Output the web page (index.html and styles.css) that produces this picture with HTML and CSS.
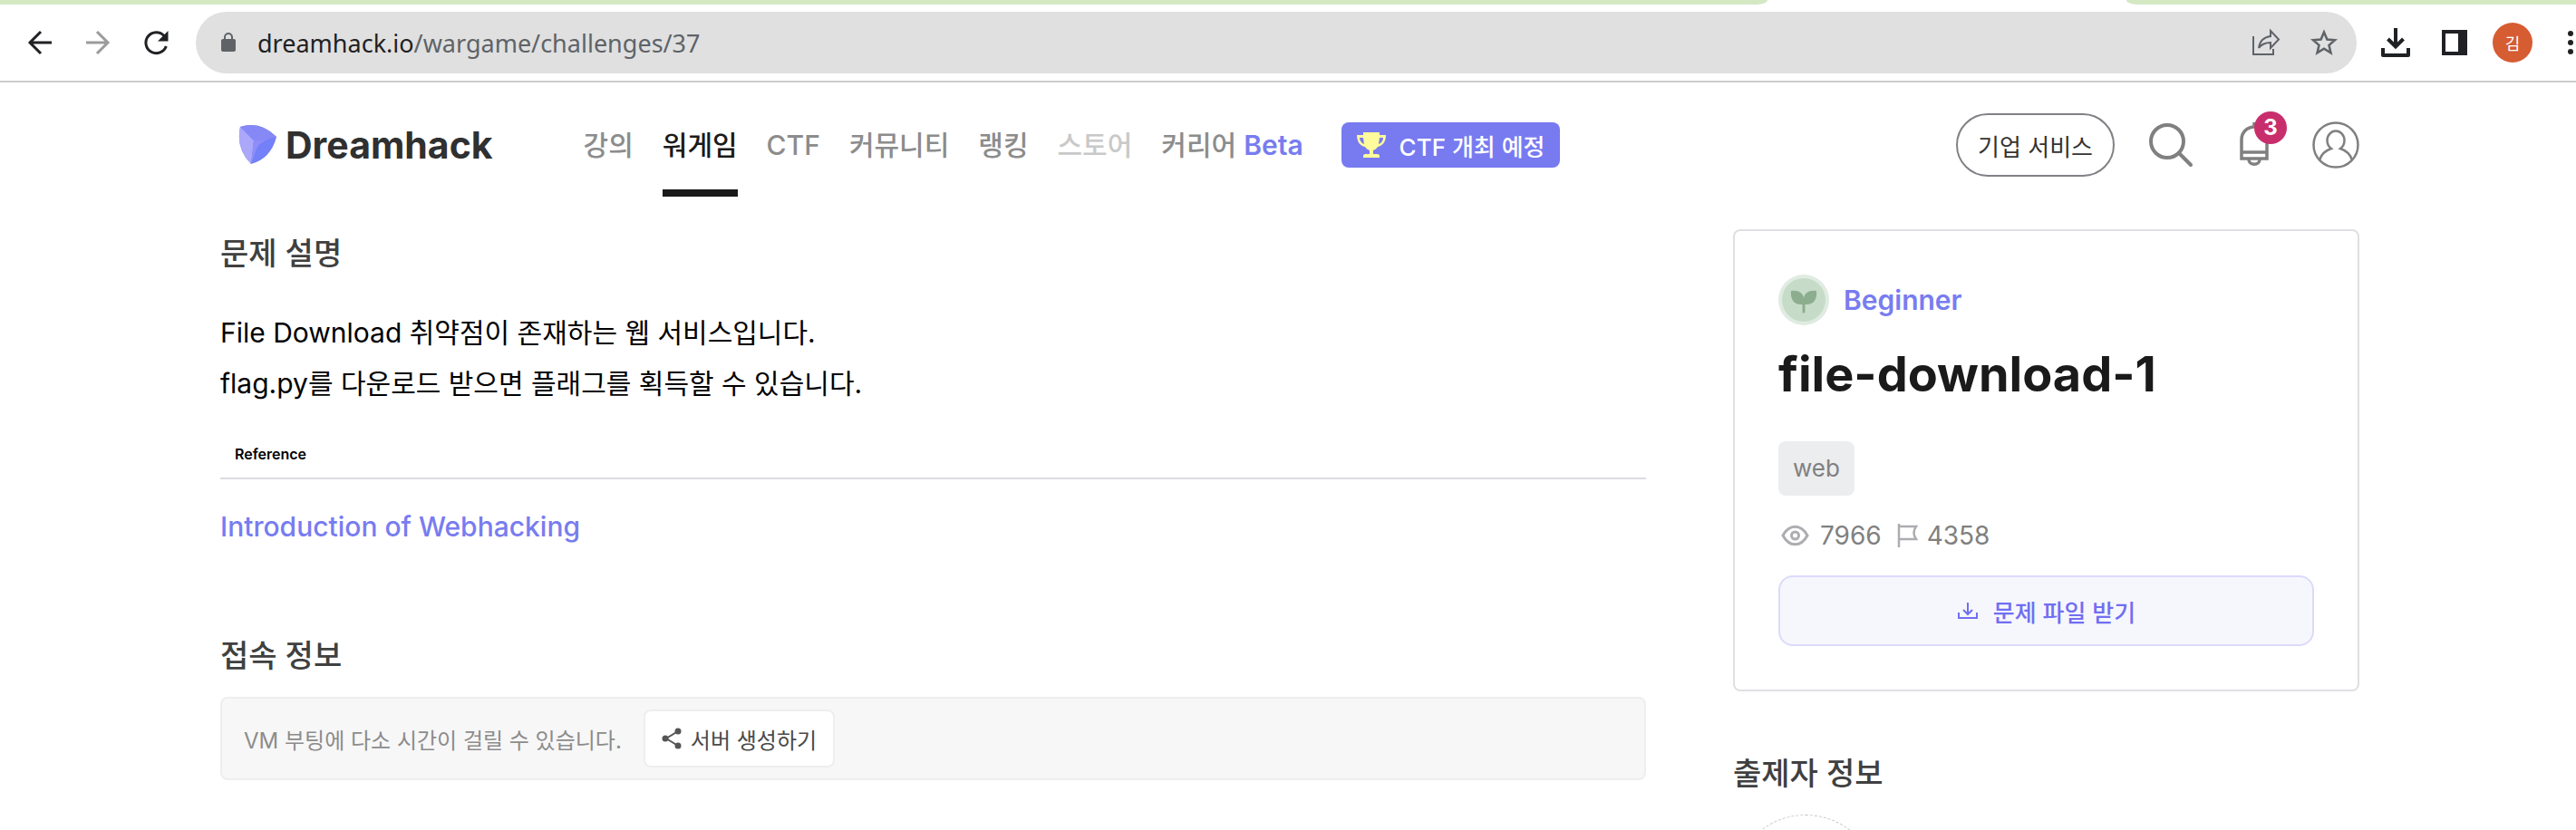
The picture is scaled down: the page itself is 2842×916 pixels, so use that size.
FILE: index.html
```html
<!DOCTYPE html>
<html lang="ko">
<head>
  <meta charset="UTF-8">
  <meta name="viewport" content="width=device-width, initial-scale=1.0">
  <title>file-download-1 | Dreamhack</title>
  <link rel="stylesheet" href="styles.css">
</head>
<body>
  <!-- browser bar -->
  <div class="tab-strip">
    <div class="tabs-left"></div>
    <div class="tabs-right"></div>
  </div>
  <div class="toolbar">
    <button class="tool-btn" aria-label="뒤로">
      <svg width="32" height="32" viewBox="0 0 32 32" fill="none" stroke="#202124" stroke-width="3"><path d="M29 16H5M17 4L5 16l12 12"/></svg>
    </button>
    <button class="tool-btn" aria-label="앞으로">
      <svg width="32" height="32" viewBox="0 0 32 32" fill="none" stroke="#9b9b9b" stroke-width="3"><path d="M3 16h24M15 4l12 12-12 12"/></svg>
    </button>
    <button class="tool-btn" aria-label="새로고침">
      <svg width="32" height="32" viewBox="0 0 32 32"><path d="M25 8.500A11.500 11.500 0 1 0 27.300 20" fill="none" stroke="#202124" stroke-width="3"/><path d="M29.500 3v11.500H18z" fill="#202124"/></svg>
    </button>
    <div class="omnibox">
      <svg class="lock" width="16" height="22" viewBox="0 0 16 22"><rect y="7" width="16" height="14" rx="2" fill="#5f6368"/><path d="M4 8V5a4 4 0 0 1 8 0v3" fill="none" stroke="#5f6368" stroke-width="2"/></svg>
      <span class="url"><span class="url-host">dreamhack.io</span>/wargame/challenges/37</span>
      <button class="tool-btn" aria-label="공유">
        <svg width="32" height="32" viewBox="0 0 32 32" fill="none" stroke="#5f6368" stroke-width="2"><path d="M2 9v20h22v-6"/><path d="M21 3l9 9.500L21 22v-6c-6 0-10 2-13 6 1-7 5-12 13-13z"/></svg>
      </button>
      <button class="tool-btn" aria-label="북마크">
        <svg width="32" height="32" viewBox="0 0 32 32" fill="none" stroke="#5f6368" stroke-width="2.500"><path d="M16 4.500l3.400 8 8.600.7-6.500 5.700 2 8.500-7.500-4.600-7.500 4.600 2-8.500L4 13.200l8.600-.7z"/></svg>
      </button>
    </div>
    <button class="tool-btn" aria-label="다운로드">
      <svg width="34" height="34" viewBox="0 0 34 34" fill="none" stroke="#202124" stroke-width="4"><path d="M17 1v20M8.500 13l8.500 8.500 8.500-8.500"/><path d="M3 23v8h28v-8" stroke-linejoin="round"/></svg>
    </button>
    <button class="tool-btn" aria-label="사이드 패널">
      <svg width="32" height="32" viewBox="0 0 32 32"><path d="M2 2h28v28H2zM6 6v20h14V6z" fill="#202124" fill-rule="evenodd"/></svg>
    </button>
    <button class="profile">김</button>
    <button class="tool-btn menu-btn" aria-label="메뉴">
      <svg width="8" height="28" viewBox="0 0 8 28" fill="#202124"><circle cx="4" cy="4" r="3"/><circle cx="4" cy="14" r="3"/><circle cx="4" cy="24" r="3"/></svg>
    </button>
  </div>

  <header class="header">
    <a class="logo" href="#">
      <svg width="44" height="44" viewBox="0 0 44 44"><path d="M2 2Q24-5 42 13Q36 37 14 43Q-3 26 2 2z" fill="#7380f7"/><path d="M2 2Q-3 26 14 43L17 17z" fill="#aba8fa"/><path d="M2 2Q24-5 42 13L26 17.500L17 17z" fill="#8688f6"/><path d="M17 17Q29 18 42 13Q24 18 21 24L14 43z" fill="#8f8df7"/></svg>
      <span>Dreamhack</span>
    </a>
    <nav class="nav">
      <a href="#">강의</a>
      <a class="active" href="#">워게임</a>
      <a href="#">CTF</a>
      <a href="#">커뮤니티</a>
      <a href="#">랭킹</a>
      <a class="disabled" href="#">스토어</a>
      <a href="#">커리어 <span class="beta">Beta</span></a>
    </nav>
    <a class="ctf-banner" href="#">
      <svg width="34" height="30" viewBox="0 0 34 30"><path d="M8 1h18v3h7c0 8-4 12-9 13-1 2-3 3-5 4v4h5c1 0 2 1 2 2v2H8v-2c0-1 1-2 2-2h5v-4c-2-1-4-2-5-4C5 16 1 12 1 4h7zM4 7c0 3 2 6 5 7L8 7zM30 7h-4l-1 7c3-1 5-4 5-7z" fill="#fdfb9b" fill-rule="evenodd"/></svg>
      <span>CTF 개최 예정</span>
    </a>
    <div class="header-right">
      <button class="biz-btn">기업 서비스</button>
      <button class="icon-btn" aria-label="검색">
        <svg width="52" height="52" viewBox="0 0 52 52" fill="none" stroke="#808080" stroke-width="4"><circle cx="20" cy="22" r="18"/><path d="M33 35l13 13" stroke-linecap="round"/></svg>
      </button>
      <button class="icon-btn bell" aria-label="알림">
        <svg width="52" height="52" viewBox="0 0 52 52" fill="none" stroke="#808080" stroke-width="3.500"><path d="M12 41V20a14 14 0 0 1 28 0v21zM12 34h28M20 42c0 7 12 7 12 0M26 6V1"/></svg>
        <span class="badge">3</span>
      </button>
      <button class="icon-btn" aria-label="내 정보">
        <svg width="52" height="52" viewBox="0 0 52 52" fill="none" stroke="#808080" stroke-width="2.500"><circle cx="26" cy="26" r="24.500"/><path d="M8 43C10 35 15 32 21 30C17 27 16.500 24 16.500 21a9.500 10.500 0 0 1 19 0C35.500 24 35 27 31 30C37 32 42 35 44 43"/></svg>
      </button>
    </div>
  </header>

  <div class="content">
    <main class="main">
      <h2>문제 설명</h2>
      <p class="desc">File Download 취약점이 존재하는 웹 서비스입니다.<br>flag.py를 다운로드 받으면 플래그를 획득할 수 있습니다.</p>
      <h3 class="ref-title">Reference</h3>
      <a class="ref-link" href="#">Introduction of Webhacking</a>
      <h2>접속 정보</h2>
      <div class="vm-box">
        <span>VM 부팅에 다소 시간이 걸릴 수 있습니다.</span>
        <button class="vm-btn">
          <svg width="22" height="24" viewBox="0 0 22 24" fill="#555"><path d="M18 4L5 12l13 8" fill="none" stroke="#555" stroke-width="2"/><circle cx="18" cy="4" r="3.500"/><circle cx="4" cy="12" r="3.500"/><circle cx="18" cy="20" r="3.500"/></svg>
          서버 생성하기
        </button>
      </div>
    </main>

    <aside class="side">
      <section class="card">
        <div class="level">
          <svg width="56" height="56" viewBox="0 0 56 56"><circle cx="28" cy="28" r="28" fill="#e0ebe1"/><circle cx="28" cy="28" r="24" fill="#c6dcc8"/><path d="M28 26c1-6 6-9 14-8 1 9-3 15-11 15h-6c-8 0-12-6-11-15 8-1 13 2 14 8z" fill="#8dad8f"/><path d="M28 31v10" stroke="#8dad8f" stroke-width="3" stroke-linecap="round"/></svg>
          <span>Beginner</span>
        </div>
        <h1>file-download-1</h1>
        <span class="tag">web</span>
        <div class="stats">
          <span class="stat">
            <svg width="36" height="32" viewBox="0 0 36 32" fill="none" stroke="#adadb1" stroke-width="3"><path d="M5 16c7-13 20-13 27 0-7 13-20 13-27 0z"/><circle cx="18.500" cy="16" r="4"/></svg>
            7966
          </span>
          <span class="stat">
            <svg width="24" height="32" viewBox="0 0 24 32" fill="none" stroke="#adadb1" stroke-width="2.500"><path d="M3 3v26M3 6h19q-5 7 0 14H3"/></svg>
            4358
          </span>
        </div>
        <button class="download-btn">
          <svg width="24" height="24" viewBox="0 0 24 24" fill="none" stroke="#706ff2" stroke-width="2"><path d="M12 3v13M7 11l5 5 5-5M2 14v6h20v-6"/></svg>
          문제 파일 받기
        </button>
      </section>
      <h2>출제자 정보</h2>
      <div class="author-avatar"></div>
    </aside>
  </div>
</body>
</html>
```

FILE: styles.css
```css
* {
  box-sizing: border-box;
}

body {
  display: flex;
  flex-direction: column;
  margin: 0;
  height: 100vh;
  background-color: #fff;
  color: #000;
  font-family: Inter, "Noto Sans CJK KR", sans-serif;
  font-size: 30px;
}

a {
  color: inherit;
  text-decoration: none;
}

button {
  display: flex;
  align-items: center;
  justify-content: center;
  padding: 0;
  border: none;
  background: none;
  font-family: inherit;
  cursor: pointer;
}

svg {
  display: block;
  flex-shrink: 0;
}

h1, h2, h3, p {
  margin: 0;
}

/* browser bar */
.tab-strip {
  display: flex;
  justify-content: space-between;
  flex-shrink: 0;
  height: 5px;
}

.tabs-left,
.tabs-right {
  background-color: #d4e8c3;
}

.tabs-left {
  width: 1950px;
  border-bottom-right-radius: 12px 5px;
}

.tabs-right {
  width: 496px;
  border-bottom-left-radius: 12px 5px;
}

.toolbar {
  display: flex;
  align-items: center;
  flex-shrink: 0;
  gap: 32px;
  height: 86px;
  padding-left: 28px;
  border-bottom: 2px solid #ccc;
}

.omnibox {
  flex: 1;
  display: flex;
  align-items: center;
  gap: 32px;
  height: 68px;
  margin-right: -6px;
  margin-left: -4px;
  padding: 0 20px 0 28px;
  border-radius: 34px;
  background-color: #e0e0e0;
}

.url {
  flex: 1;
  margin-left: -8px;
  font-family: "Noto Sans", "Noto Sans CJK KR", sans-serif;
  font-size: 27px;
  color: #5f6368;
}

.url-host {
  color: #202124;
}

.profile {
  width: 44px;
  height: 44px;
  margin-left: -6px;
  border-radius: 50%;
  background-color: #d65c32;
  color: #fff;
  font-size: 18px;
}

.menu-btn {
  margin: 0 2px 0 6px;
}

/* site header */
.header {
  display: flex;
  align-items: center;
  flex-shrink: 0;
  height: 138px;
  padding: 0 239px 0 263px;
}

.logo {
  display: flex;
  align-items: center;
  gap: 8px;
  margin-right: 100px;
  font-size: 41px;
  font-weight: 700;
  color: #303030;
}

.nav {
  display: flex;
  align-self: stretch;
  gap: 32px;
  color: #8c8c8c;
  font-weight: 500;
}

.nav a {
  height: 126px;
  line-height: 138px;
  white-space: nowrap;
}

.nav .active {
  border-bottom: 8px solid #1a1a1a;
  color: #1a1a1a;
}

.nav .disabled {
  color: #c9c9c9;
}

.nav .beta {
  color: #787cf0;
  font-weight: 600;
}

.ctf-banner {
  display: flex;
  align-items: center;
  gap: 14px;
  height: 50px;
  margin-left: 42px;
  padding: 0 16px;
  border-radius: 8px;
  background-color: #787af0;
  color: #fff;
  font-size: 26px;
  font-weight: 500;
}

.header-right {
  display: flex;
  align-items: center;
  gap: 38px;
  margin-left: auto;
}

.biz-btn {
  height: 70px;
  padding: 0 22px;
  border: 2px solid #808086;
  border-radius: 35px;
  color: #333;
  font-size: 26px;
}

.icon-btn {
  position: relative;
}

.badge {
  position: absolute;
  top: -11px;
  right: -10px;
  width: 36px;
  height: 36px;
  border-radius: 50%;
  background-color: #c92e6c;
  color: #fff;
  font-size: 24px;
  font-weight: 700;
  line-height: 36px;
}

/* page */
.content {
  display: grid;
  flex: 1;
  grid-template-columns: minmax(0, 1573fr) minmax(0, 691fr);
  gap: 96px;
  min-height: 0;
  padding: 24px 239px 0 243px;
  overflow: hidden;
}

h2 {
  color: #404040;
  font-size: 34px;
  font-weight: 500;
  line-height: 54px;
}

.desc {
  margin-top: 32px;
  line-height: 56px;
}

.ref-title {
  height: 56px;
  margin-top: 22px;
  padding-left: 16px;
  border-bottom: 2px solid #dcdce2;
  font-size: 16px;
  font-weight: 600;
  line-height: 56px;
}

.ref-link {
  display: block;
  margin: 32px 0 96px;
  color: #787cf0;
  font-weight: 500;
  line-height: 40px;
}

.vm-box {
  display: flex;
  align-items: center;
  gap: 24px;
  height: 92px;
  margin-top: 18px;
  padding: 0 24px;
  border: 2px solid #eee;
  border-radius: 8px;
  background-color: #f7f7f7;
  color: #8c8c8c;
  font-size: 24px;
}

.vm-btn {
  gap: 10px;
  height: 64px;
  padding: 0 18px;
  border: 2px solid #eee;
  border-radius: 8px;
  background-color: #fff;
  color: #4a4a4a;
  font-size: 24px;
}

.card {
  padding: 48px;
  border: 2px solid #e0e0e4;
  border-radius: 8px;
}

.level {
  display: flex;
  align-items: center;
  gap: 16px;
  color: #787cf0;
  font-weight: 600;
}

h1 {
  margin-top: 18px;
  color: #1a1a1a;
  font-size: 54px;
  font-weight: 700;
  line-height: 72px;
}

.tag {
  display: inline-block;
  margin-top: 38px;
  padding: 0 16px;
  border-radius: 8px;
  background-color: #ecedef;
  color: #808080;
  font-size: 26px;
  line-height: 60px;
}

.stats {
  display: flex;
  gap: 16px;
  margin-top: 24px;
  color: #808080;
  font-size: 28px;
  line-height: 40px;
}

.stat {
  display: flex;
  align-items: center;
  gap: 10px;
}

.download-btn {
  gap: 16px;
  width: 100%;
  height: 78px;
  margin-top: 24px;
  border: 2px solid #dcdafb;
  border-radius: 16px;
  background-color: #f6f7fd;
  color: #706ff2;
  font-size: 26px;
  font-weight: 500;
}

.side h2 {
  margin-top: 64px;
}

.author-avatar {
  width: 160px;
  height: 160px;
  margin-top: 18px;
  border: 1px dashed #c4c4c4;
  border-radius: 50%;
}
```
